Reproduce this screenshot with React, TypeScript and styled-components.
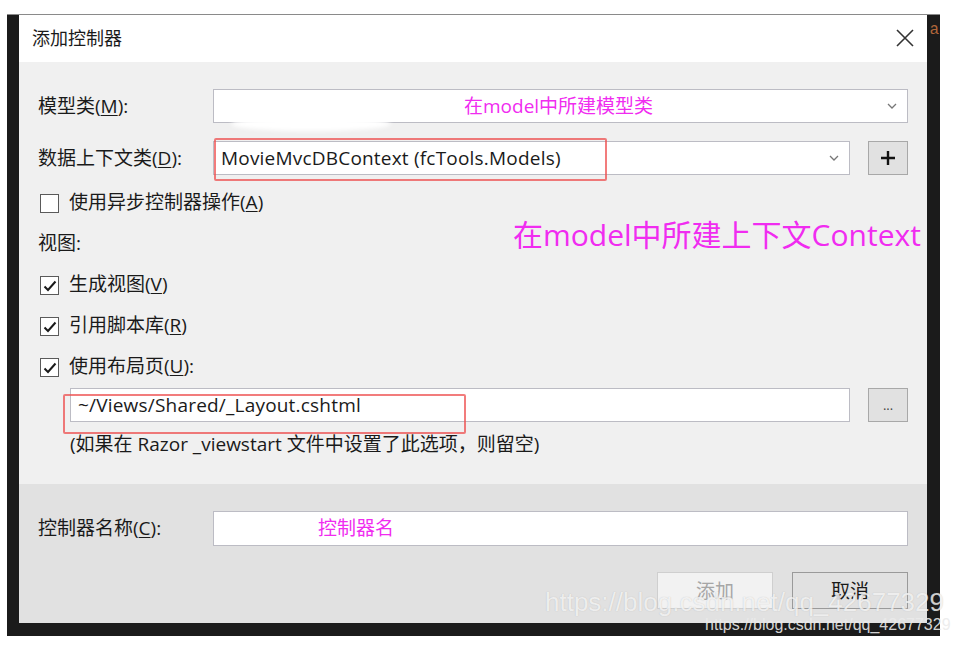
import styled, { createGlobalStyle } from "styled-components";

const GlobalStyle = createGlobalStyle`
  body {
    margin: 0;
    background: #ffffff;
    font-family: "Open Sans", "Noto Sans CJK SC", sans-serif;
  }
`;

const Page = styled.div`
  padding: 14px 0 0 7px;
  width: 958px;
  height: 646px;
  box-sizing: border-box;
  position: relative;
  overflow: hidden;
`;

const Frame = styled.div`
  width: 933px;
  height: 622px;
  box-sizing: border-box;
  background: #1b1b1b;
  border-top: 1px solid #8a8a8a;
  padding: 0 13px 13px 12px;
  position: relative;
`;

const Dialog = styled.div`
  width: 908px;
  height: 608px;
  display: flex;
  flex-direction: column;
  background: #f0f0f0;
  color: #1a1a1a;
  font-size: 19px;
  line-height: 22px;
  position: relative;
`;

const TitleBar = styled.div`
  height: 47px;
  flex: none;
  display: flex;
  align-items: center;
  justify-content: space-between;
  padding: 0 12px 2px 13px;
  box-sizing: border-box;
  background: #ffffff;
  font-size: 18px;
`;

const CloseButton = styled.div`
  width: 20px;
  height: 20px;
  display: flex;
  align-items: center;
  justify-content: center;
  margin-top: 1px;
`;

const Body = styled.div`
  height: 422px;
  flex: none;
  box-sizing: border-box;
  padding: 27px 19px 0 19px;
  display: flex;
  flex-direction: column;
`;

const Footer = styled.div`
  flex: 1;
  background: #e1e1e1;
  padding: 27px 19px 0 19px;
  display: flex;
  flex-direction: column;
`;

const FieldRow = styled.div<{ $gap?: number }>`
  display: flex;
  align-items: center;
  height: 34px;
  margin-bottom: ${(p) => p.$gap ?? 0}px;
`;

const Label = styled.div`
  width: 175px;
  flex: none;
  white-space: nowrap;
`;

const Box = styled.div<{ $tall?: boolean }>`
  flex: 1;
  height: ${(p) => (p.$tall ? 35 : 34)}px;
  box-sizing: border-box;
  background: #ffffff;
  border: 1px solid #bcbcc4;
  display: flex;
  align-items: center;
  padding: 0 10px 1px 7px;
  position: relative;
  white-space: nowrap;
  letter-spacing: 0.2px;
`;

const Chevron = styled.svg`
  margin-left: auto;
  flex: none;
  margin-top: 1px;
`;

const SideButton = styled.div`
  width: 40px;
  height: 34px;
  flex: none;
  margin-left: 18px;
  box-sizing: border-box;
  background: #e1e1e1;
  border: 1px solid #a8a8a8;
  display: flex;
  align-items: center;
  justify-content: center;
  font-size: 13px;
  color: #444;
`;

const OptionRow = styled.div`
  height: 41px;
  display: flex;
  align-items: center;
  gap: 10px;
  white-space: nowrap;
`;

const OptionText = styled.span`
  padding-bottom: 3px;
`;

const CheckBox = styled.div`
  width: 19px;
  height: 19px;
  margin-left: 2px;
  box-sizing: border-box;
  border: 1px solid #5a5a5a;
  background: #ffffff;
  display: flex;
  align-items: center;
  justify-content: center;
`;

const Indented = styled.div`
  padding-left: 32px;
  display: flex;
  flex-direction: column;
`;

const Hint = styled.div`
  margin-top: 11px;
  white-space: nowrap;
`;

const Key = styled.span`
  text-decoration: underline;
  text-underline-offset: 2px;
`;

const Note = styled.span`
  color: #f02cf0;
  white-space: nowrap;
  letter-spacing: 0;
`;

const BigNote = styled.div`
  position: absolute;
  left: 494px;
  top: 202px;
  color: #f02cf0;
  font-size: 30px;
  line-height: 36px;
  white-space: nowrap;
`;

const Buttons = styled.div`
  display: flex;
  justify-content: flex-end;
  gap: 19px;
  margin-top: 27px;
`;

const Button = styled.div<{ $disabled?: boolean }>`
  width: 116px;
  height: 37px;
  box-sizing: border-box;
  display: flex;
  align-items: center;
  justify-content: center;
  background: ${(p) => (p.$disabled ? "#f2f2f2" : "#e1e1e1")};
  border: 1px solid ${(p) => (p.$disabled ? "#cfcfcf" : "#9a9a9a")};
  color: ${(p) => (p.$disabled ? "#a6a6a6" : "#1a1a1a")};
`;

const RedMark = styled.div`
  position: absolute;
  border: 2px solid rgba(238, 80, 80, 0.75);
  border-radius: 2px;
  pointer-events: none;
`;

const Smudge = styled.div`
  position: absolute;
  left: 212px;
  top: 102px;
  width: 160px;
  height: 14px;
  background: #ffffff;
  border-radius: 50%;
  filter: blur(2px);
`;

const Watermark = styled.div`
  position: absolute;
  left: 545px;
  top: 587px;
  font-family: "Liberation Sans", Arial, sans-serif;
  font-size: 26px;
  color: rgba(255, 255, 255, 0.75);
  text-shadow: 0 0 1px rgba(120, 120, 120, 0.4);
  white-space: nowrap;
`;

const SmallWatermark = styled.div`
  position: absolute;
  left: 705px;
  top: 616px;
  font-family: "Liberation Sans", Arial, sans-serif;
  font-size: 16px;
  color: rgba(235, 235, 235, 0.9);
  white-space: nowrap;
`;

const EditorGlyph = styled.div`
  position: absolute;
  right: 1px;
  top: 6px;
  font-family: "Liberation Mono", monospace;
  font-size: 16px;
  color: #b0663a;
`;

const Check = () => (
  <svg width="14" height="12" viewBox="0 0 14 12">
    <path d="M1.5 6.5 L5 10 L12.5 1.5" fill="none" stroke="#1a1a1a" strokeWidth="2" />
  </svg>
);

const Down = () => (
  <Chevron width="10" height="6" viewBox="0 0 10 6">
    <path d="M1 1 L5 5 L9 1" fill="none" stroke="#777" strokeWidth="1.3" />
  </Chevron>
);

export default function App() {
  return (
    <Page>
      <GlobalStyle />
      <Frame>
        <EditorGlyph>a</EditorGlyph>
        <Dialog>
          <TitleBar>
            <span>添加控制器</span>
            <CloseButton>
              <svg width="18" height="18" viewBox="0 0 18 18">
                <path d="M1 1 L17 17 M17 1 L1 17" stroke="#333" strokeWidth="1.6" />
              </svg>
            </CloseButton>
          </TitleBar>

          <Body>
            <FieldRow $gap={18}>
              <Label>
                模型类(<Key>M</Key>):
              </Label>
              <Box>
                <span style={{ marginLeft: 243 }}>
                  <Note>在model中所建模型类</Note>
                </span>
                <Down />
              </Box>
            </FieldRow>

            <FieldRow $gap={8}>
              <Label>
                数据上下文类(<Key>D</Key>):
              </Label>
              <Box>
                MovieMvcDBContext (fcTools.Models)
                <Down />
              </Box>
              <SideButton>
                <svg width="16" height="16" viewBox="0 0 16 16">
                  <path d="M8 1 V15 M1 8 H15" stroke="#111" strokeWidth="2.4" />
                </svg>
              </SideButton>
            </FieldRow>

            <OptionRow>
              <CheckBox />
              <OptionText>
                使用异步控制器操作(<Key>A</Key>)
              </OptionText>
            </OptionRow>
            <OptionRow>
              <OptionText>视图:</OptionText>
            </OptionRow>
            <OptionRow>
              <CheckBox>
                <Check />
              </CheckBox>
              <OptionText>
                生成视图(<Key>V</Key>)
              </OptionText>
            </OptionRow>
            <OptionRow>
              <CheckBox>
                <Check />
              </CheckBox>
              <OptionText>
                引用脚本库(<Key>R</Key>)
              </OptionText>
            </OptionRow>
            <OptionRow>
              <CheckBox>
                <Check />
              </CheckBox>
              <OptionText>
                使用布局页(<Key>U</Key>):
              </OptionText>
            </OptionRow>

            <Indented>
              <FieldRow>
                <Box>~/Views/Shared/_Layout.cshtml</Box>
                <SideButton>...</SideButton>
              </FieldRow>
              <Hint>(如果在 Razor _viewstart 文件中设置了此选项，则留空)</Hint>
            </Indented>
          </Body>

          <Footer>
            <FieldRow>
              <Label>
                控制器名称(<Key>C</Key>):
              </Label>
              <Box $tall>
                <span style={{ marginLeft: 97 }}>
                  <Note>控制器名</Note>
                </span>
              </Box>
            </FieldRow>
            <Buttons>
              <Button $disabled>添加</Button>
              <Button>取消</Button>
            </Buttons>
          </Footer>

          <Smudge />
          <BigNote>在model中所建上下文Context</BigNote>
          <RedMark style={{ left: 195, top: 123, width: 389, height: 39 }} />
          <RedMark style={{ left: 44, top: 379, width: 399, height: 36 }} />
        </Dialog>
      </Frame>
      <Watermark>https://blog.csdn.net/qq_42677329</Watermark>
      <SmallWatermark>https://blog.csdn.net/qq_42677329</SmallWatermark>
    </Page>
  );
}
